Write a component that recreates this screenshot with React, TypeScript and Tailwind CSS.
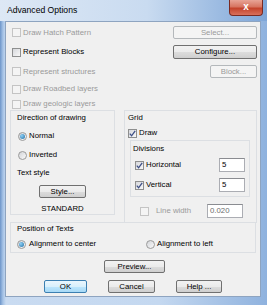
import React from "react";

const FONT = { fontFamily: '"Liberation Sans", Arial, sans-serif' };

function Check({ checked = false, disabled = false }: { checked?: boolean; disabled?: boolean }) {
  return (
    <div
      className={
        "w-[9px] h-[9px] shrink-0 border flex items-center justify-center " +
        (disabled
          ? "border-[#c4c4c4] bg-[#f4f4f4]"
          : "border-[#8e8f8f] bg-[linear-gradient(135deg,#d6d8dc,#f8f8f8)]")
      }
    >
      {checked && (
        <svg width="7" height="7" viewBox="0 0 7 7">
          <path d="M0.8 3.6 L2.6 5.8 L6.2 0.8" stroke="#3d4f86" strokeWidth="1.3" fill="none" />
        </svg>
      )}
    </div>
  );
}

function Radio({ checked = false }: { checked?: boolean }) {
  return (
    <div className="w-[9px] h-[9px] shrink-0 rounded-full border border-[#9a9a9a] bg-[linear-gradient(135deg,#d2d4d8,#fafafa)] flex items-center justify-center">
      {checked && <div className="w-[5px] h-[5px] rounded-full bg-[radial-gradient(circle_at_35%_35%,#8fd0f5,#1f6da3)]" />}
    </div>
  );
}

function Btn({
  label,
  w,
  disabled = false,
  def = false,
  h = 13,
}: {
  label: string;
  w: string;
  disabled?: boolean;
  def?: boolean;
  h?: number;
}) {
  const base = "flex items-center justify-center rounded-[2px] border text-[7.8px] leading-none shrink-0 ";
  const style = disabled
    ? "border-[#b4b8bb] bg-[#f4f4f4] text-[#9a9a9a]"
    : def
    ? "border-[#3c7fb1] bg-[linear-gradient(#eaf6fd_0%,#d9f0fc_50%,#bee6fd_50%,#a7d9f5_100%)] text-black"
    : "border-[#707070] bg-[linear-gradient(#f2f2f2_0%,#ebebeb_50%,#dddddd_50%,#cfcfcf_100%)] text-black";
  return (
    <div className={base + style + " " + w + (h === 14 ? " h-[14px]" : " h-[13px]")}>{label}</div>
  );
}

function Input({ value, w, disabled = false }: { value: string; w: string; disabled?: boolean }) {
  return (
    <div
      className={
        "h-[14px] border border-[#abadb3] border-t-[#8a8c91] bg-white flex items-center pl-[2px] text-[7.8px] leading-none shrink-0 " +
        w +
        (disabled ? " text-[#6d6d6d]" : " text-black")
      }
    >
      {value}
    </div>
  );
}

export default function App() {
  return (
    <div
      style={FONT}
      className="w-[267px] h-[305px] overflow-hidden flex flex-col bg-[linear-gradient(to_right,#6d95c9_0px,#a6c3e6_3px,#c9dbf1_6px,#c4d8f0_60%,#8fb2de_100%)]"
    >
      {/* title bar */}
      <div className="h-[21px] flex items-start justify-between shrink-0 bg-[linear-gradient(to_right,#dde8f5,#c9dbf0_55%,#7ea6d8)]">
        <div className="pl-[7px] pt-[5px] text-[8.6px] leading-[10px] text-black">Advanced Options</div>
        <div className="mr-[4px] w-[34px] h-[16px] rounded-b-[4px] border border-t-0 border-[#7a2a22] bg-[linear-gradient(#e8a496_0%,#d77561_45%,#c4432b_55%,#d8705c_100%)] flex items-center justify-center">
          <span className="text-white text-[10px] font-bold leading-none -mt-[2px]">x</span>
        </div>
      </div>

      <div className="flex flex-1">
        {/* client */}
        <div className="ml-[5px] w-[256px] h-[276px] border border-[#8ea4c0] bg-[#f0f0f0] text-[7.8px] leading-[10px] text-black flex flex-col">
          {/* top rows */}
          <div className="pl-[6px] pr-[3px] pt-[4px] flex flex-col">
            <div className="h-[13px] flex items-center justify-between">
              <div className="flex items-center gap-[2px] text-[#9a9a9a]">
                <Check disabled />
                <span>Draw Hatch Pattern</span>
              </div>
              <Btn label="Select..." w="w-[84px]" disabled />
            </div>
            <div className="mt-[6px] h-[14px] flex items-center justify-between">
              <div className="flex items-center gap-[2px]">
                <Check />
                <span>Represent Blocks</span>
              </div>
              <Btn label="Configure..." w="w-[84px]" h={14} />
            </div>
            <div className="mt-[6px] h-[13px] flex items-center justify-between">
              <div className="flex items-center gap-[2px] text-[#9a9a9a]">
                <Check disabled />
                <span>Represent structures</span>
              </div>
              <Btn label="Block..." w="w-[47px]" disabled />
            </div>
            <div className="mt-[5px] h-[12px] flex items-center gap-[2px] text-[#9a9a9a]">
              <Check disabled />
              <span>Draw Roadbed layers</span>
            </div>
            <div className="mt-[3px] h-[12px] flex items-center gap-[2px] text-[#9a9a9a]">
              <Check disabled />
              <span>Draw geologic layers</span>
            </div>
          </div>

          {/* middle section */}
          <div className="pl-[4px] flex items-start">
            {/* Direction / Text style */}
            <div className="w-[105px] h-[105px] border border-[#dcdfe3] flex flex-col">
              <div className="mt-[2px] pl-[6px] h-[10px]">Direction of drawing</div>
              <div className="mt-[8px] pl-[7px] h-[10px] flex items-center gap-[2px]">
                <Radio checked />
                <span>Normal</span>
              </div>
              <div className="mt-[9px] pl-[7px] h-[10px] flex items-center gap-[2px]">
                <Radio />
                <span>Inverted</span>
              </div>
              <div className="mt-[8px] pl-[6px] h-[10px]">Text style</div>
              <div className="mt-[7px] ml-[28px]">
                <Btn label="Style..." w="w-[47px]" />
              </div>
              <div className="mt-[6px] ml-[28px] w-[47px] h-[10px] text-center">STANDARD</div>
            </div>

            {/* Grid */}
            <div className="ml-[9px] w-[133px] h-[113px] border border-[#dcdfe3] flex flex-col">
              <div className="mt-[2px] pl-[3px] h-[10px]">Grid</div>
              <div className="mt-[5px] pl-[3px] h-[10px] flex items-center gap-[2px]">
                <Check checked />
                <span>Draw</span>
              </div>
              <div className="mt-[2px] ml-[5px] w-[120px] h-[57px] border border-[#dcdfe3] flex flex-col">
                <div className="mt-[3px] pl-[2px] h-[10px]">Divisions</div>
                <div className="mt-[4px] pl-[4px] pr-[4px] h-[14px] flex items-center justify-between">
                  <div className="flex items-center gap-[2px]">
                    <Check checked />
                    <span>Horizontal</span>
                  </div>
                  <Input value="5" w="w-[26px]" />
                </div>
                <div className="mt-[6px] pl-[4px] pr-[4px] h-[14px] flex items-center justify-between">
                  <div className="flex items-center gap-[2px]">
                    <Check checked />
                    <span>Vertical</span>
                  </div>
                  <Input value="5" w="w-[26px]" />
                </div>
              </div>
              <div className="mt-[7px] pl-[15px] pr-[13px] h-[14px] flex items-center justify-between">
                <div className="flex items-center gap-[7px] text-[#9a9a9a]">
                  <Check disabled />
                  <span>Line width</span>
                </div>
                <Input value="0.020" w="w-[36px]" disabled />
              </div>
            </div>
          </div>

          {/* Position of texts */}
          <div className="-mt-[1px] ml-[4px] w-[246px] h-[31px] border border-[#dcdfe3] flex flex-col">
            <div className="mt-[1px] pl-[6px] h-[10px]">Position of Texts</div>
            <div className="mt-[5px] pl-[6px] h-[10px] flex items-center">
              <div className="w-[129px] flex items-center gap-[3px]">
                <Radio checked />
                <span>Alignment to center</span>
              </div>
              <div className="flex items-center gap-[2px]">
                <Radio />
                <span>Alignment to left</span>
              </div>
            </div>
          </div>

          <div className="mt-[7px] ml-[98px]">
            <Btn label="Preview..." w="w-[61px]" />
          </div>
          <div className="mt-[7px] ml-[38px] flex items-center gap-[21px]">
            <Btn label="OK" w="w-[43px]" def />
            <Btn label="Cancel" w="w-[47px]" />
            <Btn label="Help ..." w="w-[46px]" />
          </div>
        </div>
      </div>
    </div>
  );
}
